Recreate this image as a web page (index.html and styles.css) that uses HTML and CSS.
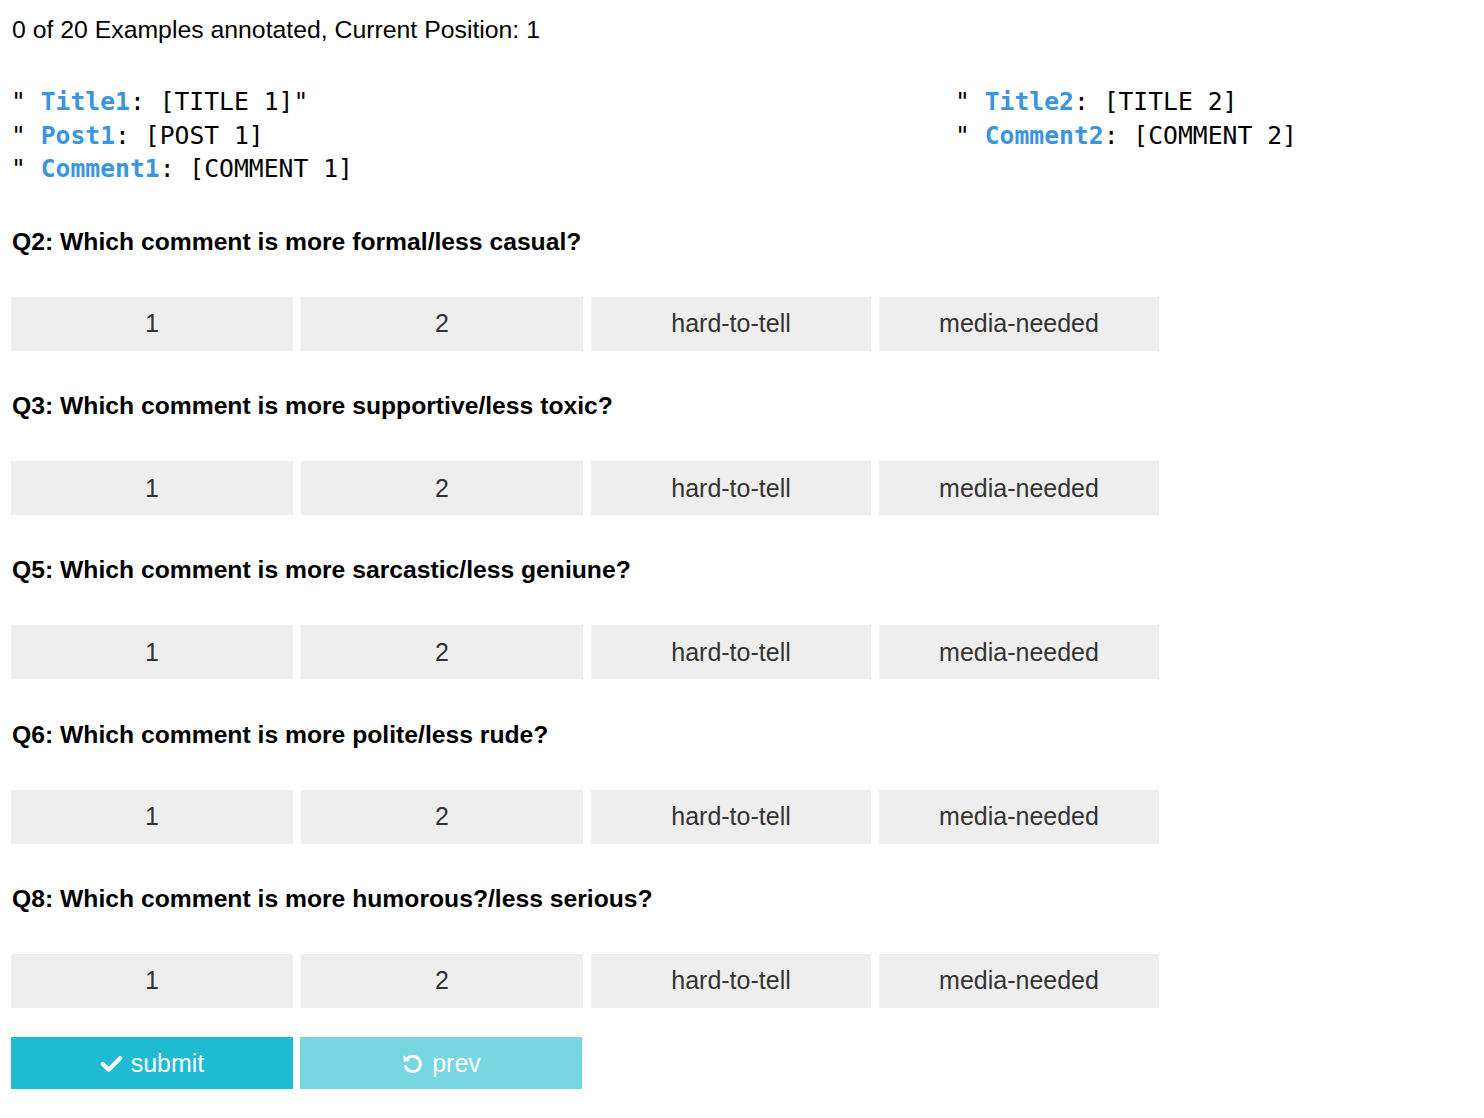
FILE: index.html
```html
<!DOCTYPE html>
<html>
  <head>
    <meta charset="utf-8" />
    <title>Annotation</title>
    <link rel="stylesheet" href="styles.css">
  </head>

  <body>
    <div class="page">
      <div class="progress">0 of 20 Examples annotated, Current Position: 1</div>

      <div class="example">
        <div class="col">
          <div class="line">" <span class="key">Title1</span>: [TITLE 1]"</div>
          <div class="line">" <span class="key">Post1</span>: [POST 1]</div>
          <div class="line">" <span class="key">Comment1</span>: [COMMENT 1]</div>
        </div>
        <div class="col">
          <div class="line">" <span class="key">Title2</span>: [TITLE 2]</div>
          <div class="line">" <span class="key">Comment2</span>: [COMMENT 2]</div>
        </div>
      </div>

      <div class="question">
        <div class="q_title">Q2: Which comment is more formal/less casual?</div>
        <div class="choices">
          <button class="choice">1</button>
          <button class="choice">2</button>
          <button class="choice">hard-to-tell</button>
          <button class="choice">media-needed</button>
        </div>
      </div>

      <div class="question">
        <div class="q_title">Q3: Which comment is more supportive/less toxic?</div>
        <div class="choices">
          <button class="choice">1</button>
          <button class="choice">2</button>
          <button class="choice">hard-to-tell</button>
          <button class="choice">media-needed</button>
        </div>
      </div>

      <div class="question">
        <div class="q_title">Q5: Which comment is more sarcastic/less geniune?</div>
        <div class="choices">
          <button class="choice">1</button>
          <button class="choice">2</button>
          <button class="choice">hard-to-tell</button>
          <button class="choice">media-needed</button>
        </div>
      </div>

      <div class="question">
        <div class="q_title">Q6: Which comment is more polite/less rude?</div>
        <div class="choices">
          <button class="choice">1</button>
          <button class="choice">2</button>
          <button class="choice">hard-to-tell</button>
          <button class="choice">media-needed</button>
        </div>
      </div>

      <div class="question">
        <div class="q_title">Q8: Which comment is more humorous?/less serious?</div>
        <div class="choices">
          <button class="choice">1</button>
          <button class="choice">2</button>
          <button class="choice">hard-to-tell</button>
          <button class="choice">media-needed</button>
        </div>
      </div>

      <div class="actions">
        <button class="btn_action btn_submit">
          <svg class="icon" viewBox="0 0 24 24" width="23" height="23">
            <path d="M3 12.5 L9 18.5 L21 6.5" fill="none" stroke="#fff" stroke-width="4.4" stroke-linecap="round" stroke-linejoin="round" />
          </svg>
          submit
        </button>
        <button class="btn_action btn_prev">
          <svg class="icon" viewBox="0 0 24 24" width="23" height="23">
            <path d="M6.2 7.2 A8 8 0 1 1 4.6 15" fill="none" stroke="#fff" stroke-width="3" stroke-linecap="round" />
            <path d="M2.5 3.5 L3 10.2 L9.6 9.3 Z" fill="#fff" />
          </svg>
          prev
        </button>
      </div>
    </div>
  </body>
</html>
```

FILE: styles.css
```css
body {
  margin: 0;
  font-family: "Liberation Sans", Arial, sans-serif;
  color: #000;
}
.page {
  padding: 17px 11px 20px 11px;
}
.progress {
  font-size: 24.8px;
  line-height: 26px;
  padding-left: 1px;
}
.example {
  display: grid;
  grid-template-columns: 944px 1fr;
  margin-top: 42px;
  padding-bottom: 1px;
  font-family: "DejaVu Sans Mono", Menlo, monospace;
  font-size: 24.7px;
  line-height: 33.5px;
}
.example .line {
  white-space: pre;
}
.key {
  color: #3a95dc;
  font-weight: bold;
}
.question {
  margin-top: 42.25px;
}
.q_title {
  font-size: 24.7px;
  line-height: 26px;
  font-weight: bold;
  padding-left: 1px;
}
.choices {
  display: grid;
  grid-template-columns: 282px 282px 280px 280px;
  column-gap: 8px;
  margin-top: 42px;
}
.choice {
  height: 54px;
  border: none;
  margin: 0;
  background: #eeeeee;
  color: #333;
  font-family: "Liberation Sans", Arial, sans-serif;
  font-size: 25px;
}
.actions {
  display: grid;
  grid-template-columns: 282px 282px;
  column-gap: 7px;
  margin-top: 29.5px;
}
.btn_action {
  height: 52px;
  border: none;
  margin: 0;
  color: #fff;
  font-family: "Liberation Sans", Arial, sans-serif;
  font-size: 25px;
  display: flex;
  align-items: center;
  justify-content: center;
  gap: 8px;
}
.btn_submit {
  background: #1fbbd3;
}
.btn_prev {
  background: #78d6e3;
}
.icon {
  display: block;
}
```
